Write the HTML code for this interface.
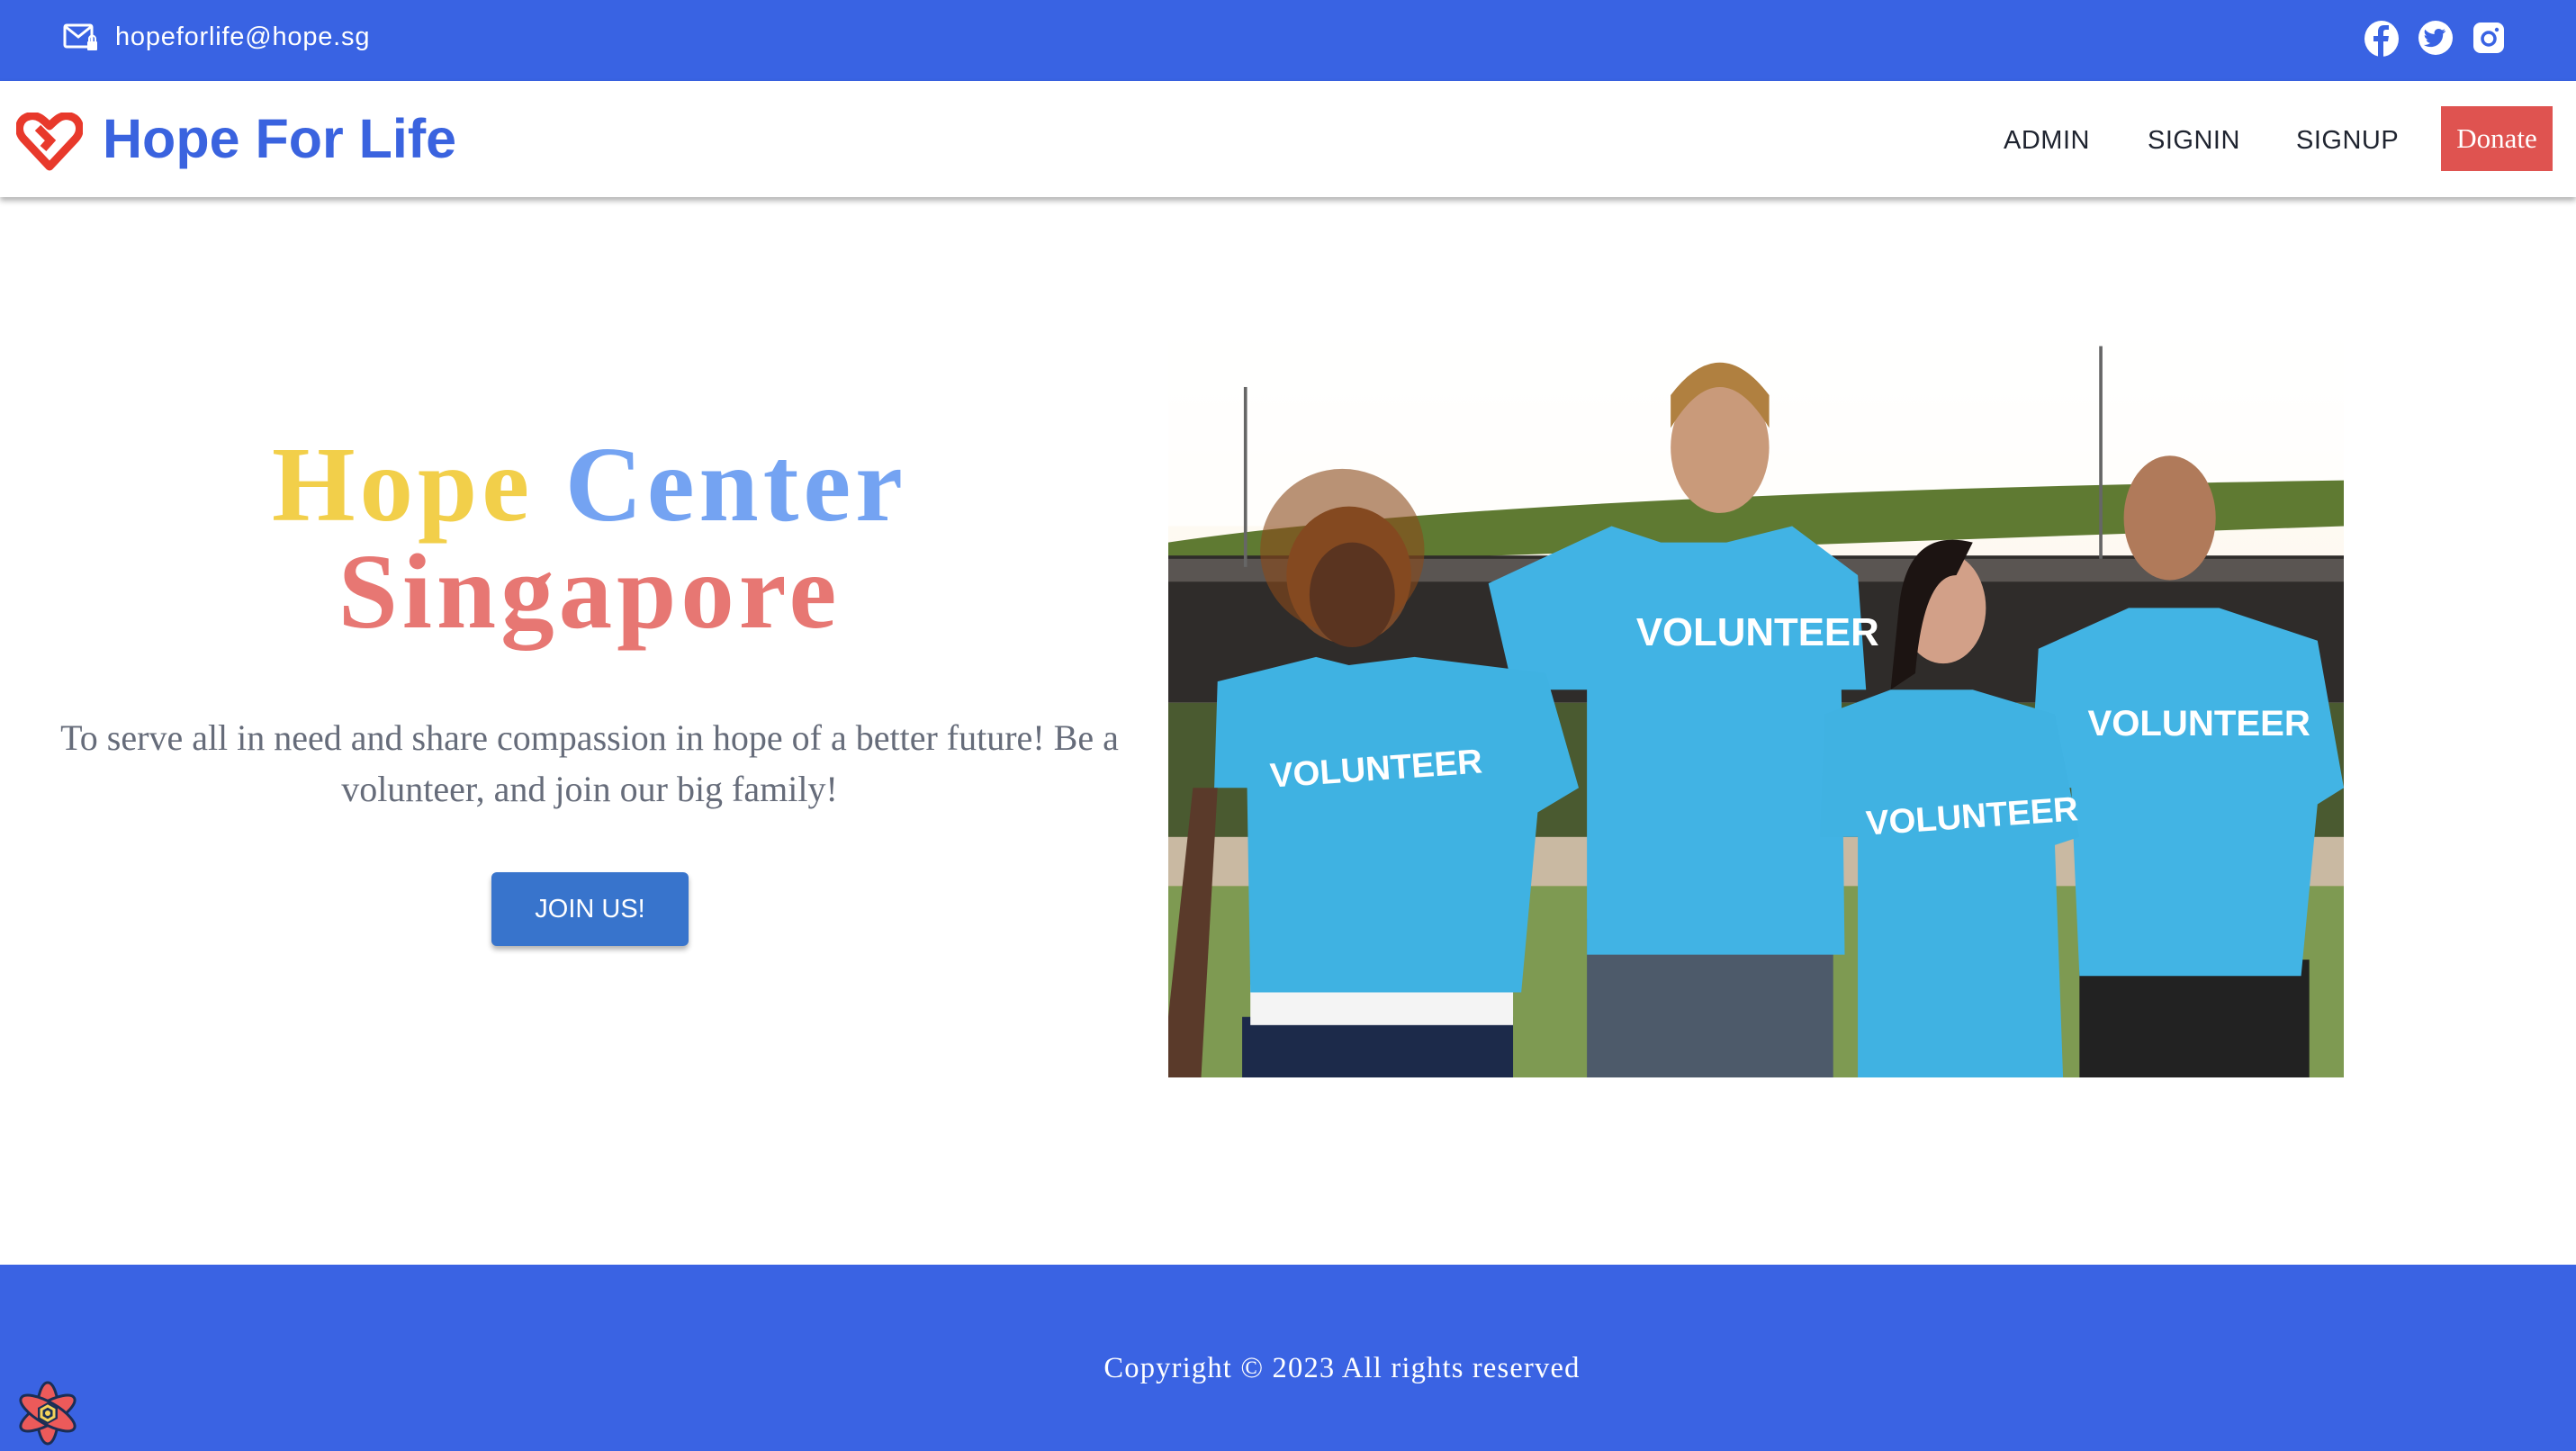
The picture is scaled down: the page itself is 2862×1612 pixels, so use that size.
<!DOCTYPE html>
<html><head><meta charset="utf-8"><style>
*{margin:0;padding:0;box-sizing:border-box}
body{width:2862px;height:1612px;position:relative;background:#fff;overflow:hidden;font-family:"Liberation Sans",sans-serif}
.top{position:absolute;left:0;top:0;width:2862px;height:90px;background:#3963e3}
.nav{position:absolute;left:0;top:90px;width:2862px;height:129px;background:#fff;box-shadow:0 4px 6px rgba(0,0,0,.3);z-index:2}
.abs{position:absolute}
.navl{position:absolute;font-size:29px;color:#1f2430;letter-spacing:.5px}
.foot{position:absolute;left:0;top:1405px;width:2862px;height:207px;background:#3a63e3}
</style></head><body>
<div class="top">
  <svg class="abs" style="left:70px;top:26px" width="40" height="32" viewBox="0 0 40 32"><rect x="2" y="2" width="30" height="24" rx="2" fill="none" stroke="#fff" stroke-width="3"/><path d="M2 3 L17 15 L32 3" fill="none" stroke="#fff" stroke-width="3"/><rect x="27" y="20" width="11" height="10" rx="1" fill="#fff"/><path d="M29 20 v-3 a3.5 3.5 0 0 1 7 0 v3" fill="none" stroke="#fff" stroke-width="2"/></svg>
  <div class="abs" style="left:128px;top:25px;font-size:29px;color:#fff;letter-spacing:.8px">hopeforlife@hope.sg</div>
  <svg class="abs" style="left:2626px;top:22px" width="40" height="42" viewBox="0 0 40 42"><ellipse cx="20" cy="21" rx="19" ry="20" fill="#fff"/><path d="M22 41 V24 h5 l1-6 h-6 v-4 c0-2 1-3 3-3 h3 V6 h-5 c-5 0-7 3-7 7 v5 h-5 v6 h5 v17z" fill="#3963e3"/></svg>
  <svg class="abs" style="left:2686px;top:22px" width="40" height="40" viewBox="0 0 40 40"><ellipse cx="20" cy="20" rx="19" ry="19" fill="#fff"/><path d="M31 12 c-1 .5-2 .8-3 .9 1-.7 2-1.6 2.3-2.7-1 .6-2 1-3.3 1.3-2-2.2-6-2-7.6.5-.8 1.2-1 2.6-.7 4-4-.2-7.8-2.1-10.3-5.2-1.4 2.4-.6 5.4 1.6 6.8-.8 0-1.6-.2-2.3-.6 0 2.5 1.8 4.6 4.2 5.1-.8.2-1.5.2-2.3.1.6 2.1 2.6 3.5 4.7 3.6-2.1 1.6-4.8 2.4-7.5 2.1 9.8 6 21.8-.6 21.4-12.4 1-.7 2-1.6 2.7-2.6z" fill="#3963e3"/></svg>
  <svg class="abs" style="left:2747px;top:24px" width="36" height="36" viewBox="0 0 36 36"><rect x="1" y="1" width="34" height="34" rx="8" fill="#fff"/><circle cx="18" cy="19" r="7" fill="none" stroke="#3963e3" stroke-width="3.5"/><circle cx="27" cy="9" r="2.2" fill="#3963e3"/></svg>
</div>
<div class="nav"></div>
<div style="position:absolute;left:0;top:90px;width:2862px;height:129px;z-index:3">
  <svg class="abs" style="left:18px;top:35px" width="74" height="66" viewBox="0 0 74 66"><path d="M37 60 L8 29 C0 20 3 6 15 4 C24 2 30 8 37 15 C44 8 50 2 59 4 C71 6 74 20 66 29 Z" fill="none" stroke="#e8392b" stroke-width="9" stroke-linejoin="round"/><path d="M24 17 L38 31 L30 40" fill="none" stroke="#e8392b" stroke-width="9"/></svg>
  <div class="abs" style="left:114px;top:29px;font-size:61px;font-weight:bold;color:#3a63df">Hope For Life</div>
  <div class="navl" style="left:2226px;top:50px">ADMIN</div>
  <div class="navl" style="left:2386px;top:50px">SIGNIN</div>
  <div class="navl" style="left:2551px;top:50px">SIGNUP</div>
  <div class="abs" style="left:2712px;top:28px;width:124px;height:72px;background:#df5350;color:#fff;font-family:'Liberation Serif',serif;font-size:31px;text-align:center;line-height:72px">Donate</div>
</div>

<div class="abs" style="left:55px;top:479px;width:1200px;text-align:center;font-family:'Liberation Serif',serif;font-weight:bold;font-size:119px;line-height:119px;letter-spacing:5px">
  <span style="color:#f2cf4a">Hope</span> <span style="color:#74a3f2">Center</span><br><span style="color:#e77773">Singapore</span>
</div>
<div class="abs" style="left:40px;top:791px;width:1230px;text-align:center;font-family:'Liberation Serif',serif;font-size:40px;line-height:57px;color:#666c7a">To serve all in need and share compassion in hope of a better future! Be a volunteer, and join our big family!</div>
<div class="abs" style="left:546px;top:969px;width:219px;height:82px;background:#3874cc;border-radius:6px;box-shadow:0 4px 6px rgba(0,0,0,.3);color:#fff;font-size:29px;text-align:center;line-height:82px">JOIN US!</div>

<svg class="abs" style="left:1298px;top:330px" width="1306" height="867" viewBox="0 0 716 477" preserveAspectRatio="none">
<defs><linearGradient id="sky" x1="0" y1="0" x2="0" y2="1"><stop offset="0" stop-color="#fff"/><stop offset=".5" stop-color="#fdf6ea"/><stop offset=".68" stop-color="#f3cf8a"/><stop offset="1" stop-color="#d49a40"/></linearGradient></defs>
<rect width="716" height="477" fill="url(#sky)"/>
<rect x="0" y="0" width="716" height="140" fill="#fff" opacity=".7"/>
<path d="M0 150 Q200 120 716 112 L716 140 L0 165Z" fill="#5f7a32"/>
<rect x="0" y="158" width="716" height="90" fill="#2f2c2a"/>
<rect x="0" y="160" width="716" height="14" fill="#5a5552"/>
<rect x="0" y="248" width="716" height="90" fill="#4a5a30"/>
<rect x="0" y="330" width="716" height="30" fill="#c9b9a2"/>
<rect x="0" y="360" width="716" height="117" fill="#7e9a52"/>
<rect x="46" y="55" width="2" height="110" fill="#666"/><rect x="567" y="30" width="2" height="130" fill="#666"/>
<rect x="255" y="380" width="150" height="97" fill="#4d5a6a"/>
<path d="M195 175 L270 140 L300 150 L340 150 L380 140 L420 170 L425 240 L410 240 L412 402 L255 402 L255 240 L210 240Z" fill="#41b3e4"/>
<ellipse cx="336" cy="92" rx="30" ry="40" fill="#c99a7a"/><path d="M306 80 Q336 30 366 80 L366 60 Q336 20 306 60Z" fill="#b08040"/>
<text x="285" y="213" font-family="Liberation Sans" font-weight="bold" font-size="24" fill="#fff">VOLUNTEER</text>
<rect x="45" y="440" width="165" height="37" fill="#1c2a4a"/><rect x="50" y="420" width="160" height="25" fill="#f4f4f4"/>
<path d="M30 235 L90 220 L110 225 L150 220 L230 230 L250 300 L225 315 L215 425 L50 425 L48 300 L28 300Z" fill="#3fb2e2"/>
<path d="M0 440 L15 300 L30 300 L20 477 L0 477Z" fill="#5a3a2a"/>
<ellipse cx="110" cy="170" rx="38" ry="42" fill="#7a4a2a"/><circle cx="106" cy="155" r="50" fill="#8a4a1a" opacity=".6"/><ellipse cx="112" cy="182" rx="26" ry="32" fill="#5a3420"/>
<text x="62" y="295" font-family="Liberation Sans" font-weight="bold" font-size="21" fill="#fff" transform="rotate(-4 130 290)">VOLUNTEER</text>
<rect x="555" y="405" width="140" height="72" fill="#222"/>
<path d="M530 215 L585 190 L640 190 L700 210 L716 300 L700 310 L690 415 L555 415 L550 300 L525 300Z" fill="#42b4e4"/>
<ellipse cx="610" cy="135" rx="28" ry="38" fill="#b07a5a"/>
<text x="560" y="268" font-family="Liberation Sans" font-weight="bold" font-size="22" fill="#fff">VOLUNTEER</text>
<path d="M400 255 L440 240 L490 240 L540 255 L555 330 L540 335 L545 477 L420 477 L420 330 L397 330Z" fill="#40b2e2"/>
<ellipse cx="472" cy="190" rx="26" ry="34" fill="#d2a088"/><path d="M445 190 Q450 140 490 150 L480 170 Q460 170 455 230 L440 240Z" fill="#1c1412"/>
<text x="425" y="325" font-family="Liberation Sans" font-weight="bold" font-size="21" fill="#fff" transform="rotate(-4 480 320)">VOLUNTEER</text>
</svg>

<div class="foot"></div>
<div class="abs" style="left:980px;top:1502px;width:1022px;text-align:center;font-family:'Liberation Serif',serif;font-size:32.5px;color:#fff;letter-spacing:1.2px">Copyright © 2023 All rights reserved</div>
<svg class="abs" style="left:12px;top:1532px" width="82" height="76" viewBox="0 0 82 76"><g fill="#ec5a5a" stroke="#1a2e55" stroke-width="3"><ellipse cx="41" cy="38" rx="12" ry="34"/><ellipse cx="41" cy="38" rx="12" ry="34" transform="rotate(60 41 38)"/><ellipse cx="41" cy="38" rx="12" ry="34" transform="rotate(-60 41 38)"/></g><polygon points="41,26 52,32 52,44 41,50 30,44 30,32" fill="#1a2e55"/><polygon points="41,30 48,34 48,42 41,46 34,42 34,34" fill="none" stroke="#f4d25a" stroke-width="3"/><circle cx="41" cy="38" r="3" fill="#f4d25a"/></svg>
</body></html>
